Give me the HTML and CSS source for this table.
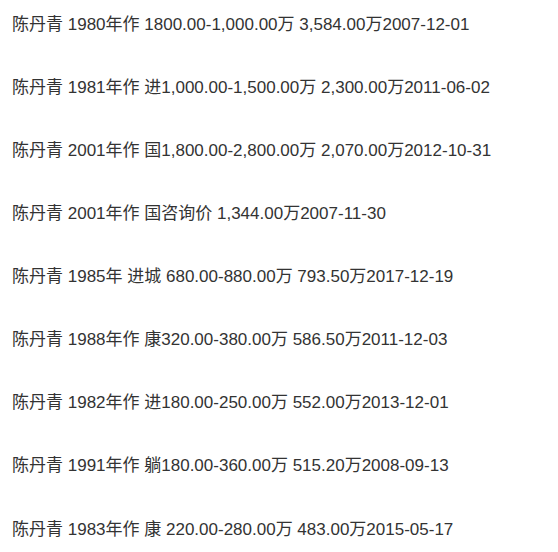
FILE: index.html
```html
<!DOCTYPE html>
<html>
<head>
<meta charset="utf-8">
<link rel="stylesheet" href="styles.css">
</head>
<body>
<div class="list">
<p class="row">陈丹青 1980年作 1800.00-1,000.00万 3,584.00万2007-12-01</p>
<p class="row">陈丹青 1981年作 进1,000.00-1,500.00万 2,300.00万2011-06-02</p>
<p class="row">陈丹青 2001年作 国1,800.00-2,800.00万 2,070.00万2012-10-31</p>
<p class="row">陈丹青 2001年作 国咨询价 1,344.00万2007-11-30</p>
<p class="row">陈丹青 1985年 进城 680.00-880.00万 793.50万2017-12-19</p>
<p class="row">陈丹青 1988年作 康320.00-380.00万 586.50万2011-12-03</p>
<p class="row">陈丹青 1982年作 进180.00-250.00万 552.00万2013-12-01</p>
<p class="row">陈丹青 1991年作 躺180.00-360.00万 515.20万2008-09-13</p>
<p class="row">陈丹青 1983年作 康 220.00-280.00万 483.00万2015-05-17</p>
</div>
</body>
</html>
```
FILE: styles.css
```css
html, body {
  margin: 0;
  padding: 0;
  background: #ffffff;
}
.list {
  display: flex;
  flex-direction: column;
  gap: 39.125px;
  padding: 12.5px 0 0 12px;
}
.row {
  margin: 0;
  font-family: "Liberation Sans", "Noto Sans CJK SC", sans-serif;
  font-size: 17px;
  line-height: 24px;
  color: #333333;
  white-space: nowrap;
}
```
